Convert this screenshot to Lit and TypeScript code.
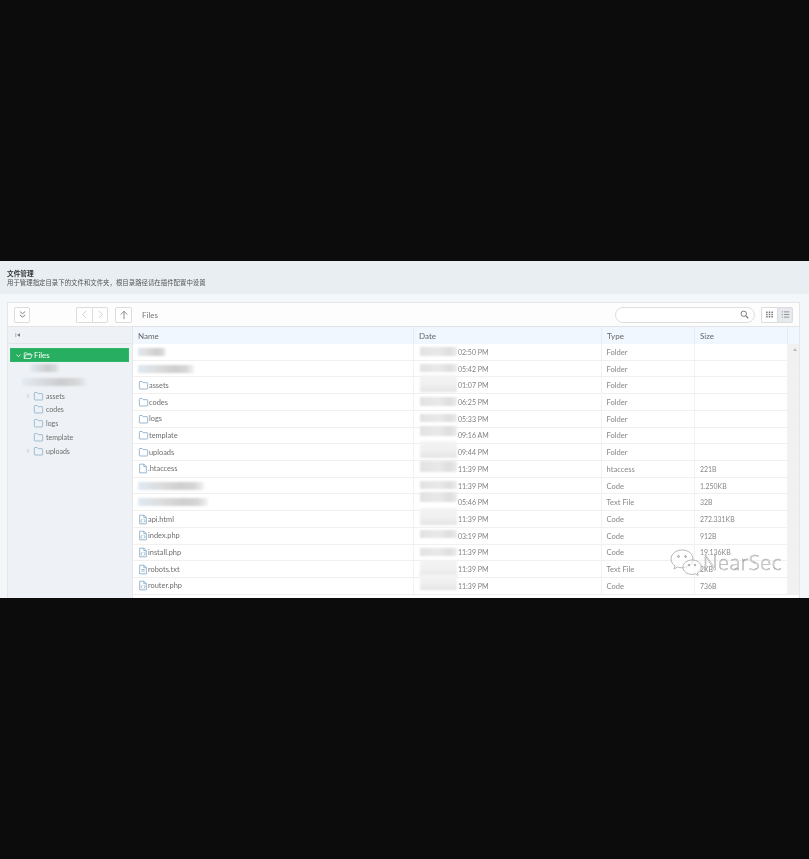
import { LitElement, html, css, svg } from "lit";
import { customElement } from "lit/decorators.js";

type Row = { name: string; icon: string; nb?: number; time: string; dt: number; dh: number; type: string; size: string };
const rows: Row[] = [
  { name: "", icon: "", nb: 28, time: "02:50 PM", dt: 3, dh: 9, type: "Folder", size: "" },
  { name: "", icon: "", nb: 56, time: "05:42 PM", dt: 3, dh: 8, type: "Folder", size: "" },
  { name: "assets", icon: "folder", time: "01:07 PM", dt: -2, dh: 17, type: "Folder", size: "" },
  { name: "codes", icon: "folder", time: "06:25 PM", dt: 3, dh: 9, type: "Folder", size: "" },
  { name: "logs", icon: "folder", time: "05:33 PM", dt: 3, dh: 8, type: "Folder", size: "" },
  { name: "template", icon: "folder", time: "09:16 AM", dt: -2, dh: 10, type: "Folder", size: "" },
  { name: "uploads", icon: "folder", time: "09:44 PM", dt: -3, dh: 17, type: "Folder", size: "" },
  { name: ".htaccess", icon: "file", time: "11:39 PM", dt: 0, dh: 11, type: "htaccess", size: "221B" },
  { name: "", icon: "", nb: 66, time: "11:39 PM", dt: 3, dh: 8, type: "Code", size: "1.250KB" },
  { name: "", icon: "", nb: 70, time: "05:46 PM", dt: -2, dh: 10, type: "Text File", size: "32B" },
  { name: "api.html", icon: "code", time: "11:39 PM", dt: -3, dh: 17, type: "Code", size: "272.331KB" },
  { name: "index.php", icon: "code", time: "03:19 PM", dt: 2, dh: 8, type: "Code", size: "912B" },
  { name: "install.php", icon: "code", time: "11:39 PM", dt: 3, dh: 8, type: "Code", size: "19.136KB" },
  { name: "robots.txt", icon: "text", time: "11:39 PM", dt: -1, dh: 17, type: "Text File", size: "2KB" },
  { name: "router.php", icon: "code", time: "11:39 PM", dt: -4, dh: 16, type: "Code", size: "736B" },
];

const s = (inner: unknown, w = 10, h = 10, vb = "0 0 12 12", cls = "ic") =>
  html`<svg class=${cls} width=${w} height=${h} viewBox=${vb} fill="none" stroke="currentColor" stroke-width="1">${inner}</svg>`;

const folder = (w = 11, h = 10) =>
  s(svg`<path d="M1 3.2V10a.8.8 0 0 0 .8.8h8.400a.8.8 0 0 0 .8-.8V4a.8.8 0 0 0-.8-.8H5.600L4.400 1.800H1.800a.8.8 0 0 0-.8.8z"/>`, w, h);
const doc = (inner: unknown) =>
  s(svg`<path d="M2 .8h5.200L10 3.600v7.600H2zM7 .8v3h3"/>${inner}`, 10, 11);
const icon = (k: string) => {
  if (k === "folder") return folder();
  if (k === "file") return doc(svg``);
  if (k === "text") return doc(svg`<path d="M4 6h4M4 8h4" />`);
  if (k === "code") return doc(svg`<path d="M5 5.500 3.400 7.500 5 9.500M7 5.500l1.600 2L7 9.500"/>`);
  return "";
};

@customElement("app-root")
export class AppRoot extends LitElement {
  static styles = css`
    :host { display: block; }
    .page { height: 859px; background: #0c0c0c; display: flex; flex-direction: column; font-family: Lato, "Noto Sans CJK SC", sans-serif; color: #666; font-size: 8px; }
    .spacer { height: 261px; flex: none; }
    .app { height: 337px; flex: none; background: #f4f7f9; overflow: hidden; position: relative; filter: blur(0.4px); }
    .head { height: 33px; background: #e8eef1; padding: 8px 7px 0; box-sizing: border-box; line-height: 9px; font-size: 6.42px; color: #555; }
    .head b { display: block; color: #333; font-size: 6.7px; }
    .panel { margin: 8px 9px 0 7px; background: #fff; border: 1px solid #e6e6e6; border-bottom: 0; height: 296px; display: flex; flex-direction: column; }
    .bar { height: 23px; flex: none; display: flex; align-items: center; background: #fdfdfd; border-bottom: 1px solid #e4e4e4; padding-left: 6px; color: #777; }
    .btn { box-sizing: border-box; height: 16px; width: 16px; border: 1px solid #dcdcdc; border-radius: 2px; display: flex; align-items: center; justify-content: center; background: #fff; color: #777; }
    .nav { margin-left: 46px; display: flex; }
    .nav .btn { color: #bbb; }
    .nav .btn:first-child { border-radius: 2px 0 0 2px; border-right: 0; }
    .nav .btn:last-child { border-radius: 0 2px 2px 0; }
    .up { margin-left: 7px; width: 17px; }
    .crumb { margin-left: 10px; font-size: 8px; color: #777; }
    .search { margin-left: auto; width: 140px; height: 16px; box-sizing: border-box; border: 1px solid #dedede; border-radius: 8px; display: flex; align-items: center; justify-content: flex-end; padding-right: 5px; color: #777; background: #fff; }
    .views { margin: 0 6px 0 6px; display: flex; }
    .views .btn { border-radius: 2px 0 0 2px; border-right: 0; }
    .views .btn + .btn { border-radius: 0 2px 2px 0; border-right: 1px solid #dcdcdc; background: #e6eaee; }
    .main { flex: 1; display: flex; min-height: 0; }
    .side { width: 125px; flex: none; background: #eef2f6; border-right: 1px solid #e4e7ea; box-sizing: border-box; }
    .side-top { height: 17px; border-bottom: 1px solid #e3e6e9; box-sizing: border-box; display: flex; align-items: center; padding-left: 7px; color: #777; }
    .sel { margin: 4px 3px 0 2px; height: 14px; background: #27ae60; color: #fff; display: flex; align-items: center; padding-left: 4px; gap: 1px; font-size: 7.8px; box-sizing: border-box; border: 1px solid #2cb868; }
    .node { height: 13.85px; display: flex; align-items: center; color: #6e6e6e; font-size: 7px; padding-left: 17px; }
    .node .tw { width: 8px; flex: none; color: #666; display: flex; }
    .node .ic { color: #8fb2c9; margin-right: 2px; }
    .smudge { height: 8px; filter: blur(1px); background: linear-gradient(90deg, #e3ebf3, #d6d9dc 35%, #cbcccd 60%, #d8d9da 85%, #eef2f6); }
    .n1 { width: 30px; margin: 0 0 0 22px; }
    .n2 { width: 66px; margin: 0 0 0 14px; }
    .treeblank { height: 13.85px; display: flex; align-items: center; }
    .first { margin-top: -1px; }
    .grid { flex: 1; min-width: 0; position: relative; display: flex; flex-direction: column; overflow: hidden; }
    .row { display: grid; grid-template-columns: 281px 188px 93px 93px 12px; height: 16.72px; box-sizing: border-box; border-bottom: 1px solid #f0f0f0; flex: none; }
    .row.h { height: 17px; background: #f0f7fe; border-bottom: 0; color: #666; }
    .cell { padding-left: 4px; display: flex; align-items: center; gap: 0; min-width: 0; position: relative; border-right: 1px solid #f2f2f2; white-space: nowrap; }
    .h .cell { border-right: 1px solid #e6ebf0; padding-left: 5px; }
    .name { padding-left: 5px; color: #6e6e6e; font-size: 7.4px; }
    .name .ic { color: #86aac4; flex: none; }
    .bar-sb { background: #f1f1f1; border: 0; padding: 0; display: block; }
    .h .bar-sb { background: #f0f7fe; border-right: 0; padding: 0; }
    .sb-up { position: absolute; left: 5px; top: 4px; width: 0; height: 0; border: 2.5px solid transparent; border-top: 0; border-bottom: 3px solid #bbb; }
    .time { margin-left: 40px; color: #808080; font-size: 7px; }
    .type { color: #888; font-size: 7.6px; padding-left: 4.5px; }
    .size { color: #888; font-size: 6.9px; padding-left: 5px; }
    .db { position: absolute; left: 6px; width: 37px; filter: blur(0.8px); background: linear-gradient(90deg, #e2e2e2, #e9e9e9 50%, #dedede 80%, #ececec); }
    .db.tall { background: linear-gradient(180deg, #f4f4f4, #f0f0f0 55%, #e4e4e4); }
    .nb { filter: blur(1px); height: 8px; background: linear-gradient(90deg, #dfe9f2, #dcdcdc 35%, #cfcfcf 65%, #d6d6d6 85%, #f4f4f4); }
    .wm { position: absolute; left: 670px; top: 288px; display: flex; align-items: center; pointer-events: none; color: #9a9a9a; }
    .wm span { font-family: "Open Sans", sans-serif; font-size: 20px; font-weight: 300; letter-spacing: 0.5px; color: rgba(255,255,255,.75); -webkit-text-stroke: 0.4px #888; }
  `;

  render() {
    return html`<div class="page">
      <div class="spacer"></div>
      <div class="app">
        <div class="head"><b>文件管理</b>用于管理指定目录下的文件和文件夹，根目录路径请在插件配置中设置</div>
        <div class="panel">
          <div class="bar">
            <div class="btn">${s(svg`<path stroke-width="1.300" d="M2.500 2 6 5l3.500-3M2.500 6.500 6 9.500l3.500-3"/>`, 9, 9)}</div>
            <div class="nav">
              <div class="btn">${s(svg`<path d="M8 1.500 3.500 6 8 10.500"/>`, 9, 9)}</div>
              <div class="btn">${s(svg`<path d="M4 1.500 8.500 6 4 10.500"/>`, 9, 9)}</div>
            </div>
            <div class="btn up">${s(svg`<path d="M6 11V1.500M2 5.500l4-4 4 4"/>`, 10, 10)}</div>
            <div class="crumb">Files</div>
            <div class="search">${s(svg`<circle cx="5" cy="5" r="3.600" stroke-width="1.300"/><path d="m8 8 3 3" stroke-width="1.500"/>`, 9, 9)}</div>
            <div class="views">
              <div class="btn">${s(svg`<path stroke-width="2" stroke-dasharray="2 1" d="M1.500 2v8.500M5 2v8.500M8.500 2v8.500"/>`, 9, 9, "0 0 10 12")}</div>
              <div class="btn">${s(svg`<path d="M1 2.500h1.500M4 2.500h7M1 6h1.500M4 6h7M1 9.500h1.500M4 9.500h7"/>`, 9, 9)}</div>
            </div>
          </div>
          <div class="main">
            <div class="side">
              <div class="side-top">${s(svg`<path d="M1.500 2v8" /><path fill="currentColor" stroke="none" d="M10 2.500v7L4 6z"/>`, 6, 6)}</div>
              <div class="sel">
                ${s(svg`<path d="M2.500 4.500 6 8l3.500-3.500" stroke-width="1.400"/>`, 7, 7)}
                ${s(svg`<path d="M1 10V2.500h3.200l1 1.200H9.500V5M1 10l2-5h8.500l-2 5z"/>`, 10, 9)}
                <span>Files</span>
              </div>
              <div class="treeblank first"><div class="smudge n1"></div></div>
              <div class="treeblank"><div class="smudge n2"></div></div>
              ${[["assets", 1], ["codes", 0], ["logs", 0], ["template", 0], ["uploads", 1]].map(
                ([n, t]) => html`<div class="node">
                  <span class="tw">${t ? s(svg`<path d="M4 2.500 7.500 6 4 9.500" stroke-width="1.200"/>`, 6, 6) : ""}</span>
                  ${folder()}<span>${n}</span>
                </div>`
              )}
            </div>
            <div class="grid">
              <div class="row h">
                <div class="cell">Name</div><div class="cell">Date</div><div class="cell">Type</div><div class="cell">Size</div><div class="cell bar-sb"></div>
              </div>
              ${rows.map(
                (r, i) => html`<div class="row">
                  <div class="cell name">
                    ${r.nb ? html`<div class="nb" style="width:${r.nb}px"></div>` : html`${icon(r.icon)}<span>${r.name}</span>`}
                  </div>
                  <div class="cell"><div class="db ${r.dh > 12 ? "tall" : ""}" style="top:${r.dt}px;height:${r.dh}px"></div><span class="time">${r.time}</span></div>
                  <div class="cell type">${r.type}</div>
                  <div class="cell size">${r.size}</div>
                  <div class="cell bar-sb">${i === 0 ? html`<i class="sb-up"></i>` : ""}</div>
                </div>`
              )}
            </div>
          </div>
        </div>
        <div class="wm">
          <svg width="33" height="27" viewBox="0 0 33 27" fill="#fff" fill-opacity=".6" stroke="currentColor" stroke-width=".7">
            <path d="M12 1C6 1 1 5 1 10c0 3 1.500 5 4 7l-1 3 3.500-2c1.500.5 3 .8 4.500.8 5.500 0 11-3.500 11-8.800S18 1 12 1z"/>
            <path d="M22 11c-5 0-9 3.200-9 7.200s4 7.200 9 7.200c1.200 0 2.300-.2 3.400-.6l2.800 1.700-.8-2.600c2.400-1.300 3.900-3.400 3.900-5.700 0-4-4-7.200-9.300-7.200z"/>
            <circle cx="8.500" cy="7.500" r=".9" fill="#888"/><circle cx="15.500" cy="7.500" r=".9" fill="#888"/>
            <circle cx="19" cy="16" r=".8" fill="#888"/><circle cx="25" cy="16" r=".8" fill="#888"/>
          </svg>
          <span>NearSec</span>
        </div>
      </div>
      <div style="flex:1"></div>
    </div>`;
  }
}
